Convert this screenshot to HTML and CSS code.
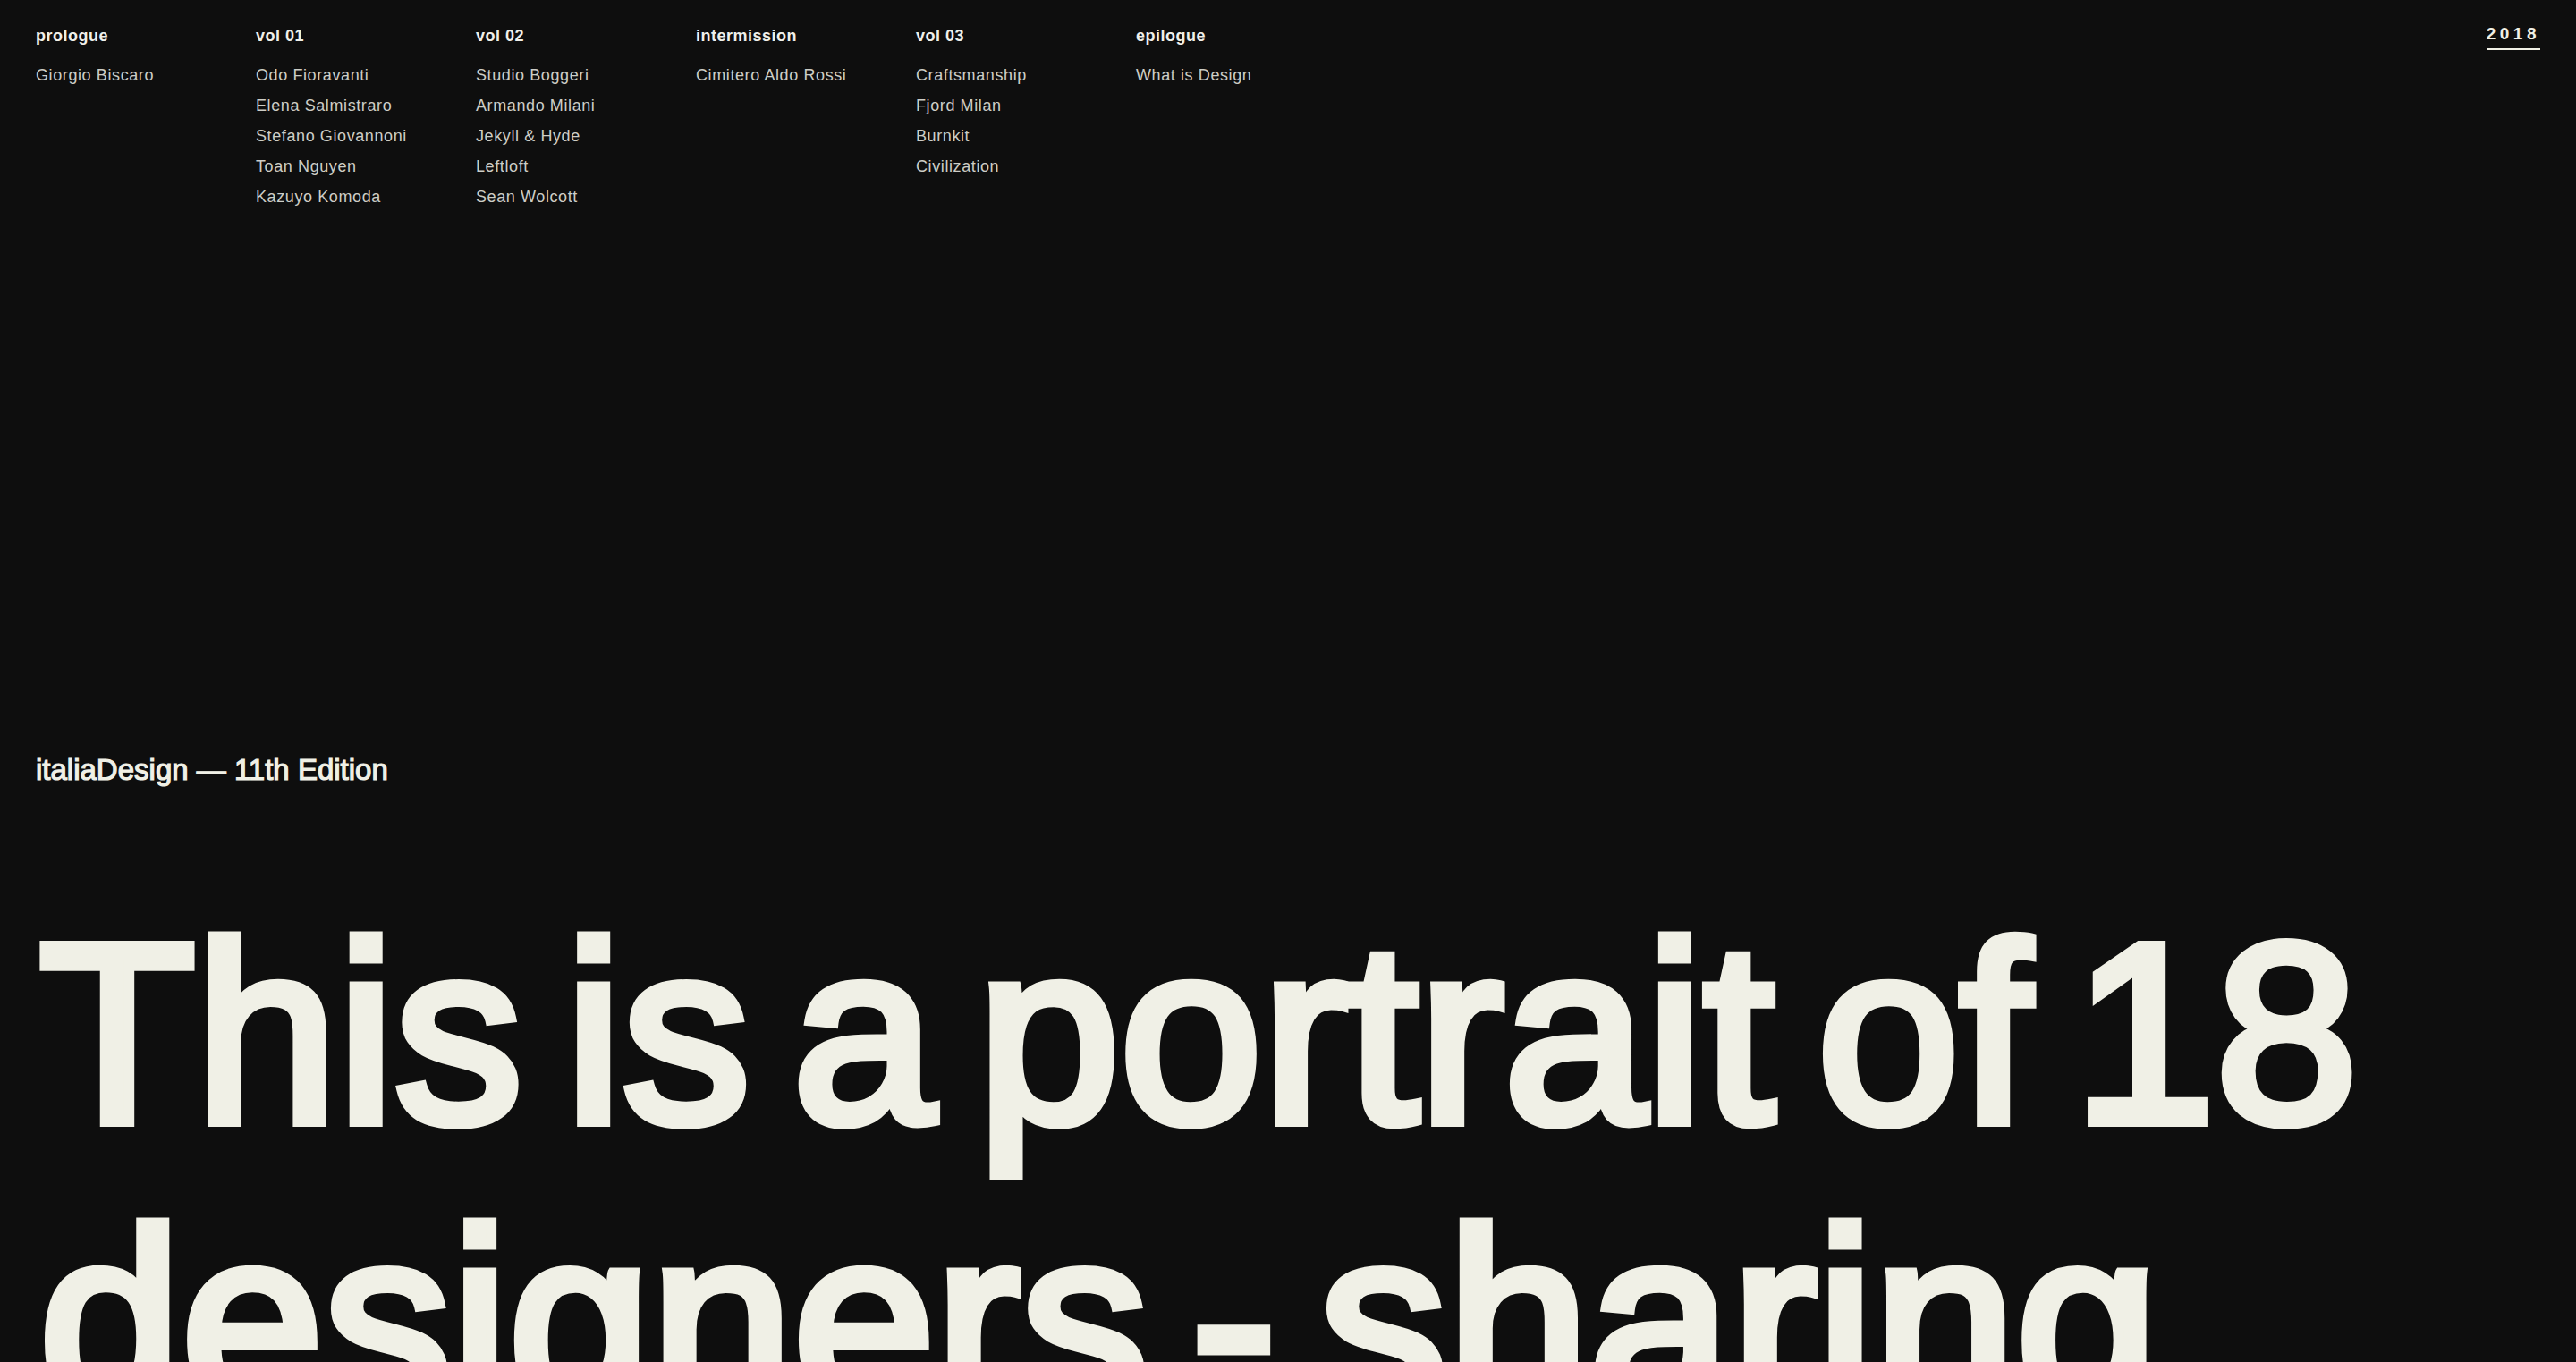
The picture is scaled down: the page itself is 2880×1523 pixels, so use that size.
FILE: index.html
```html
<!DOCTYPE html>
<html lang="en">
<head>
<meta charset="utf-8">
<title>italiaDesign — 11th Edition</title>
<link rel="stylesheet" href="styles.css">
</head>
<body>
<header class="header">
  <nav class="nav">
    <div class="col">
      <h2 class="col-title">prologue</h2>
      <ul class="col-list">
        <li>Giorgio Biscaro</li>
      </ul>
    </div>
    <div class="col">
      <h2 class="col-title">vol 01</h2>
      <ul class="col-list">
        <li>Odo Fioravanti</li>
        <li>Elena Salmistraro</li>
        <li>Stefano Giovannoni</li>
        <li>Toan Nguyen</li>
        <li>Kazuyo Komoda</li>
      </ul>
    </div>
    <div class="col">
      <h2 class="col-title">vol 02</h2>
      <ul class="col-list">
        <li>Studio Boggeri</li>
        <li>Armando Milani</li>
        <li>Jekyll &amp; Hyde</li>
        <li>Leftloft</li>
        <li>Sean Wolcott</li>
      </ul>
    </div>
    <div class="col">
      <h2 class="col-title">intermission</h2>
      <ul class="col-list">
        <li>Cimitero Aldo Rossi</li>
      </ul>
    </div>
    <div class="col">
      <h2 class="col-title">vol 03</h2>
      <ul class="col-list">
        <li>Craftsmanship</li>
        <li>Fjord Milan</li>
        <li>Burnkit</li>
        <li>Civilization</li>
      </ul>
    </div>
    <div class="col">
      <h2 class="col-title">epilogue</h2>
      <ul class="col-list">
        <li>What is Design</li>
      </ul>
    </div>
  </nav>
  <div class="year">2018</div>
</header>
<main class="hero">
  <p class="edition">italiaDesign — 11th Edition</p>
  <h1 class="headline">This is a portrait of 18 designers - sharing their vision.</h1>
</main>
</body>
</html>
```
FILE: styles.css
```css
html, body {
  margin: 0;
  padding: 0;
  background: #0e0e0e;
}
body {
  font-family: "Liberation Sans", Arial, sans-serif;
  color: #f0f0e6;
  overflow: hidden;
}
.header {
  display: flex;
  justify-content: space-between;
  align-items: flex-start;
  padding: 28px 40px 0 40px;
}
.nav {
  display: grid;
  grid-template-columns: repeat(6, 246px);
  padding-top: 3px;
}
.col-title {
  margin: 0 0 18px 0;
  font-size: 18px;
  line-height: 18px;
  font-weight: 700;
  letter-spacing: 0.5px;
  color: #f0f0ea;
}
.col-list {
  list-style: none;
  margin: 0;
  padding: 0;
  font-size: 18px;
  line-height: 34px;
  letter-spacing: 0.6px;
  color: #cdcdc6;
}
.year {
  font-size: 19px;
  line-height: 19px;
  font-weight: 700;
  letter-spacing: 4.5px;
  padding-bottom: 7px;
  border-bottom: 2px solid #f0f0e6;
  color: #f0f0e6;
}
.hero {
  padding: 0 40px;
  margin-top: 607px;
}
.edition {
  margin: 0;
  font-size: 33px;
  line-height: 33px;
  font-weight: 400;
  -webkit-text-stroke: 1.2px #f0f0e6;
}
.headline {
  margin: 118px 0 0 0;
  padding-left: 4px;
  font-size: 285px;
  line-height: 320px;
  font-weight: 400;
  letter-spacing: 0.5px;
  word-spacing: -32px;
  color: #f0f0e6;
  -webkit-text-stroke: 12px #f0f0e6;
}
```
